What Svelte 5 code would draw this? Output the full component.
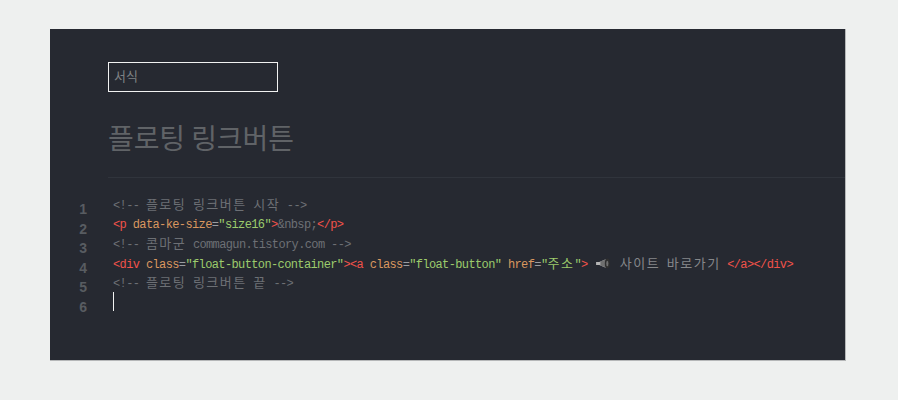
<script>
  const numbers = [1, 2, 3, 4, 5, 6];
</script>

<main class="panel">
  <div class="format">서식</div>
  <h1 class="title">플로팅 링크버튼</h1>
  <div class="editor">
    <div class="gutter">
      {#each numbers as n}
        <div class="num">{n}</div>
      {/each}
    </div>
    <div class="code">
      <div class="line c">&lt;!-- <span class="k">플로팅 링크버튼 시작</span> --&gt;</div>
      <div class="line"><span class="r">&lt;p</span> <span class="o">data-ke-size</span><span class="c2">=</span><span class="g">"size16"</span><span class="r">&gt;</span><span class="c">&amp;nbsp;</span><span class="r">&lt;/p&gt;</span></div>
      <div class="line c">&lt;!-- <span class="k">콤마군</span> commagun.tistory.com --&gt;</div>
      <div class="line"><span class="r">&lt;div</span> <span class="o">class</span><span class="c2">=</span><span class="g">"float-button-container"</span><span class="r">&gt;&lt;a</span> <span class="o">class</span><span class="c2">=</span><span class="g">"float-button"</span> <span class="o">href</span><span class="c2">=</span><span class="g">"<span class="k">주소</span>"</span><span class="r">&gt;</span> <svg class="horn" viewBox="0 0 14 10" aria-hidden="true"><path d="M1 3.5 L4 3.5 L10 1 L10 9 L4 6.5 L1 6.5 Z" fill="#b5b5b5"/><path d="M5 3.2 L10.5 1 L10.5 9 L5 6.8 Z" fill="#6f6f6f"/><ellipse cx="11.5" cy="5" rx="2.3" ry="4.6" fill="#2f2f2f"/><ellipse cx="11.5" cy="5" rx="1" ry="2.6" fill="#707070"/></svg> <span class="text k">사이트 바로가기</span> <span class="r">&lt;/a&gt;&lt;/div&gt;</span></div>
      <div class="line c">&lt;!-- <span class="k">플로팅 링크버튼 끝</span> --&gt;</div>
      <div class="line"><span class="cursor"></span></div>
    </div>
  </div>
</main>

<style>
  :global(body) {
    margin: 0;
    background: #eef0ef;
  }
  .panel {
    box-sizing: border-box;
    width: 796px;
    height: 332px;
    margin: 29px 0 0 50px;
    padding: 33px 0 0 58px;
    background: #262931;
    border-right: 1px solid #b5b7b8;
    border-bottom: 1px solid #b5b7b8;
    font-family: "Noto Sans CJK KR", sans-serif;
  }
  .format {
    box-sizing: border-box;
    width: 170px;
    height: 30px;
    padding-left: 5px;
    border: 1px solid #f2f2f2;
    color: #7f8284;
    font-size: 13px;
    line-height: 26px;
  }
  .title {
    margin: 0;
    height: 86px;
    padding-top: 25px;
    box-sizing: border-box;
    border-bottom: 1px solid #30343c;
    color: #606367;
    font-size: 28px;
    font-weight: 400;
    line-height: 40px;
    letter-spacing: -0.1px;
  }
  .editor {
    display: flex;
    margin-left: -58px;
    padding-top: 16px;
  }
  .gutter {
    width: 37px;
    padding-top: 6px;
    text-align: right;
    color: #585c61;
    font-family: "Liberation Sans", sans-serif;
    font-size: 14px;
    font-weight: 700;
  }
  .num {
    height: 19.6px;
    line-height: 19.6px;
  }
  .code {
    margin-left: 26px;
    padding-top: 2px;
    font-family: "Liberation Mono", "Noto Sans CJK KR", monospace;
    font-size: 12px;
    letter-spacing: -0.62px;
    color: #6d7075;
  }
  .line {
    height: 19.6px;
    line-height: 19.6px;
    white-space: pre;
  }
  .k {
    font-size: 13px;
    letter-spacing: 1.5px;
    word-spacing: -2.7px;
  }
  .c { color: #6d7075; }
  .c2 { color: #9a9da1; }
  .r { color: #f0524a; }
  .o { color: #d9975f; }
  .g { color: #9ccb6c; }
  .g .k { color: #9ccb6c; }
  .text { color: #85878a; }
  .horn {
    width: 15px;
    height: 11px;
    margin: 0 3px 0 1px;
    vertical-align: -1px;
  }
  .cursor {
    display: inline-block;
    width: 1px;
    height: 19px;
    margin-top: -2px;
    background: #f2f2f2;
    vertical-align: top;
  }
</style>
